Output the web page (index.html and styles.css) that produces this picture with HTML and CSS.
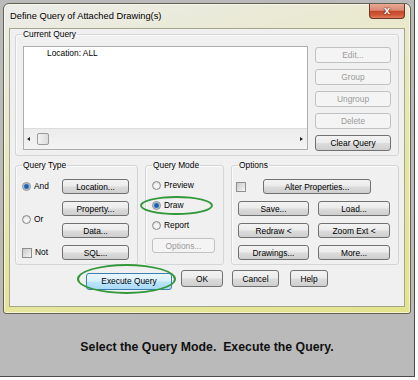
FILE: index.html
```html
<!DOCTYPE html>
<html lang="en">
<head>
    <meta charset="UTF-8">
    <title>Define Query of Attached Drawing(s)</title>
    <link rel="stylesheet" href="styles.css">
</head>
<body>

    <div class="shot">

        <!-- Janela do diálogo -->
        <div class="window">
            <div class="titlebar">
                <span class="title">Define Query of Attached Drawing(s)</span>
                <span class="close">x</span>
            </div>

            <div class="client">

                <!-- Consulta atual -->
                <fieldset class="group current">
                    <legend>Current Query</legend>
                    <div class="current-body">
                        <div class="listbox">
                            <div class="list-area">
                                <div class="list-item">Location: ALL</div>
                            </div>
                            <div class="hscroll">
                                <span class="arrow left"></span>
                                <span class="thumb"></span>
                                <span class="track"></span>
                                <span class="arrow right"></span>
                            </div>
                        </div>
                        <div class="side-buttons">
                            <button class="btn" disabled>Edit...</button>
                            <button class="btn" disabled>Group</button>
                            <button class="btn" disabled>Ungroup</button>
                            <button class="btn" disabled>Delete</button>
                            <button class="btn">Clear Query</button>
                        </div>
                    </div>
                </fieldset>

                <div class="row">
                    <!-- Tipo de consulta -->
                    <fieldset class="group qtype">
                        <legend>Query Type</legend>
                        <div class="qtype-body">
                            <label class="opt"><span class="radio on"></span>And</label>
                            <button class="btn">Location...</button>
                            <button class="btn">Property...</button>
                            <label class="opt or"><span class="radio"></span>Or</label>
                            <button class="btn">Data...</button>
                            <label class="opt"><span class="check"></span>Not</label>
                            <button class="btn">SQL...</button>
                        </div>
                    </fieldset>

                    <!-- Modo de consulta -->
                    <fieldset class="group qmode">
                        <legend>Query Mode</legend>
                        <div class="qmode-body">
                            <label class="opt"><span class="radio"></span>Preview</label>
                            <label class="opt"><span class="radio on"></span>Draw</label>
                            <label class="opt"><span class="radio"></span>Report</label>
                            <button class="btn" disabled>Options...</button>
                            <span class="mark mark-draw"></span>
                        </div>
                    </fieldset>

                    <!-- Opções -->
                    <fieldset class="group options">
                        <legend>Options</legend>
                        <div class="options-body">
                            <div class="alter-row">
                                <span class="check"></span>
                                <button class="btn alter">Alter Properties...</button>
                            </div>
                            <button class="btn">Save...</button>
                            <button class="btn">Load...</button>
                            <button class="btn">Redraw &lt;</button>
                            <button class="btn">Zoom Ext &lt;</button>
                            <button class="btn">Drawings...</button>
                            <button class="btn">More...</button>
                        </div>
                    </fieldset>
                </div>

                <!-- Botões de baixo -->
                <div class="bottom-buttons">
                    <div class="exec-wrap">
                        <button class="btn hot exec">Execute Query</button>
                        <span class="mark mark-exec"></span>
                    </div>
                    <button class="btn ok">OK</button>
                    <button class="btn cancel">Cancel</button>
                    <button class="btn help">Help</button>
                </div>
            </div>
        </div>

        <p class="caption">Select the Query Mode.  Execute the Query.</p>
    </div>

</body>
</html>
```

FILE: styles.css
```css
/* Estilos gerais */
body {
    margin: 0;
    background: #ffffff;
    font-family: "Liberation Sans", Arial, sans-serif;
}

.shot {
    box-sizing: border-box;
    width: 415px;
    height: 377px;
    padding: 3px 0 0 3px;
    background: #bababa;
    border-right: 1px solid #4c4c4c;
    border-bottom: 1px solid #4c4c4c;
}

/* Janela */
.window {
    box-sizing: border-box;
    width: 408px;
    height: 311px;
    border: 1px solid #62624e;
    border-radius: 6px 6px 3px 3px;
    background: linear-gradient(165deg, #ececea 0%, #e9e9cc 30%, #e6e6a4 60%, #e4e48e 100%);
    box-shadow: inset 0 0 0 1px rgba(255, 255, 255, 0.6);
}

.titlebar {
    display: flex;
    justify-content: space-between;
    height: 24px;
}

.title {
    padding: 6px 0 0 6px;
    font-size: 9.3px;
    line-height: 12px;
    color: #000;
}

.close {
    box-sizing: border-box;
    width: 36px;
    height: 15px;
    margin-right: 5px;
    border: 1px solid #6e3426;
    border-top: 0;
    border-radius: 0 0 4px 4px;
    background: linear-gradient(#e9a995 0%, #d98a74 45%, #c6472c 52%, #cf5a3a 80%, #e07e5c 100%);
    color: #fff;
    font-size: 11px;
    font-weight: bold;
    line-height: 13px;
    text-align: center;
    text-shadow: 0 0 2px #5a1a10, 0 0 1px #5a1a10;
}

.client {
    box-sizing: border-box;
    height: 279px;
    margin: 0 5px;
    padding: 1px 5px 0 5px;
    background: #f0f0f0;
    border: 1px solid #a5a58c;
}

/* Caixas de grupo */
.group {
    box-sizing: border-box;
    margin: 0;
    padding: 0;
    min-inline-size: 0;
    border: 1px solid #d2d6d9;
    border-radius: 3px;
    box-shadow: inset 1px 1px 0 #fbfbfb;
}

.group legend {
    margin-left: 6px;
    padding: 0 1px;
    font-size: 8.4px;
    line-height: 8px;
    color: #000;
}

.current {
    width: 384px;
    height: 126px;
}

.current-body {
    display: grid;
    grid-template-columns: 285px 76px;
    column-gap: 7px;
    padding: 8px 7px 4px 7px;
}

.listbox {
    box-sizing: border-box;
    height: 104px;
    border: 1px solid #adadad;
    background: #fff;
    display: flex;
    flex-direction: column;
}

.list-area {
    flex: 1;
    border-bottom: 1px solid #dcdcdc;
}

.list-item {
    padding: 1px 0 0 23px;
    font-size: 8.4px;
    line-height: 10px;
}

.hscroll {
    display: flex;
    align-items: center;
    height: 20px;
    background: linear-gradient(#ececec, #f3f3f3);
}

.hscroll .track {
    flex: 1;
}

.hscroll .thumb {
    box-sizing: border-box;
    width: 12px;
    height: 12px;
    border: 1px solid #9a9a9a;
    border-radius: 2px;
    background: linear-gradient(90deg, #f2f2f2, #dcdcdc);
}

.arrow {
    width: 0;
    height: 0;
    border-top: 2.5px solid transparent;
    border-bottom: 2.5px solid transparent;
}

.arrow.left {
    margin: 0 7px 0 3px;
    border-right: 3px solid #222;
}

.arrow.right {
    margin: 0 4px 0 0;
    border-left: 3px solid #222;
}

.side-buttons {
    display: flex;
    flex-direction: column;
    gap: 6px;
    margin-top: 1px;
}

.side-buttons .btn {
    height: 16px;
}

/* Botões */
.btn {
    box-sizing: border-box;
    height: 15px;
    margin: 0;
    padding: 0;
    border: 1px solid #717171;
    border-radius: 3px;
    background: linear-gradient(#f3f3f3 0%, #ebebeb 48%, #dcdcdc 52%, #cfcfcf 100%);
    font-family: "Liberation Sans", Arial, sans-serif;
    font-size: 8.4px;
    line-height: 12px;
    color: #000;
    text-align: center;
}

.btn:disabled {
    border-color: #bfc2c4;
    background: #f4f4f4;
    color: #9b9b9b;
}

.btn.hot {
    border-color: #3c7fb1;
    background: linear-gradient(#eaf6fd 0%, #d9f0fc 48%, #bee6fd 52%, #a7d9f5 100%);
}

/* Linha com três grupos */
.row {
    display: flex;
    gap: 7px;
    margin-top: 5px;
}

.row .group {
    height: 104px;
}

.qtype {
    width: 123px;
}

.qmode {
    width: 79px;
}

.options {
    width: 168px;
}

.opt {
    display: flex;
    align-items: center;
    gap: 3px;
    font-size: 8.4px;
    line-height: 15px;
}

.radio {
    box-sizing: border-box;
    width: 9px;
    height: 9px;
    border: 1px solid #8c8c8c;
    border-radius: 50%;
    background: radial-gradient(circle at 50% 60%, #f4f4f4 0 2px, #d6d6d6 4px);
}

.radio.on {
    background: radial-gradient(circle, #1f5ea8 0 1.6px, #5e9ad6 2.6px, #e2e2e2 3.4px);
}

.check {
    box-sizing: border-box;
    width: 10px;
    height: 10px;
    border: 1px solid #8e8f8f;
    background: linear-gradient(135deg, #c9c9c9, #f5f5f5);
}

.qtype-body {
    display: grid;
    grid-template-columns: 40px 67px;
    grid-template-rows: repeat(4, 15px);
    row-gap: 7px;
    padding: 10px 0 0 6px;
}

.qtype-body .btn {
    grid-column: 2;
}

.qtype-body .or {
    grid-row: 2 / span 2;
}

.qmode-body {
    position: relative;
    display: flex;
    flex-direction: column;
    gap: 5px;
    padding: 9px 0 0 6px;
}

.qmode-body .btn {
    width: 63px;
}

.options-body {
    display: grid;
    grid-template-columns: 71px 72px;
    grid-template-rows: repeat(4, 15px);
    gap: 7px 9px;
    padding: 10px 0 0 6px;
}

.alter-row {
    grid-column: 1 / span 2;
    display: flex;
    align-items: center;
}

.alter-row .check {
    margin-left: -2px;
}

.alter {
    width: 108px;
    margin-left: 17px;
}

/* Botões de baixo */
.bottom-buttons {
    display: flex;
    justify-content: center;
    gap: 9px;
    margin-top: 5px;
}

.bottom-buttons .btn {
    height: 17px;
}

.exec-wrap {
    position: relative;
}

.exec {
    width: 86px;
}

.ok {
    width: 42px;
}

.cancel {
    width: 47px;
}

.help {
    width: 38px;
    margin-left: 2px;
}

/* Marcações verdes */
.mark {
    position: absolute;
    border: 2px solid #33983a;
    border-radius: 50%;
    pointer-events: none;
}

.mark-draw {
    left: -6px;
    top: 27px;
    width: 69px;
    height: 15px;
}

.mark-exec {
    left: -9px;
    top: -6px;
    width: 95px;
    height: 26px;
}

/* Legenda */
.caption {
    margin: 25px 0 0 -3px;
    font-size: 12.3px;
    font-weight: bold;
    line-height: 16px;
    text-align: center;
    white-space: pre;
    color: #111;
}
```
